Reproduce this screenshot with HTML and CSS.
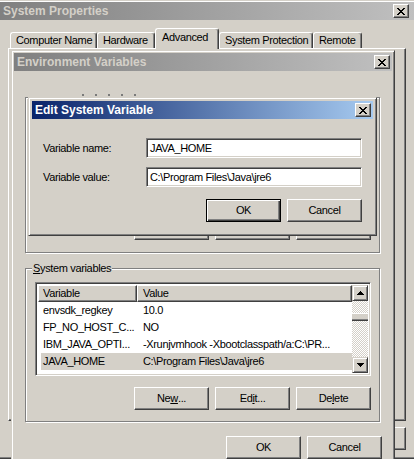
FILE: index.html
```html
<!DOCTYPE html>
<html>
<head>
<meta charset="utf-8">
<title>System Properties</title>
<link rel="stylesheet" href="styles.css">
</head>
<body>
<div class="win sys">
  <div class="title inactive">
    <span class="tt">System Properties</span>
    <span class="close"><svg width="8" height="7" viewBox="0 0 8 7" shape-rendering="crispEdges"><path d="M0 0h2v1H0zM6 0h2v1H6zM1 1h2v1H1zM5 1h2v1H5zM2 2h4v1H2zM3 3h2v1H3zM2 4h4v1H2zM1 5h2v1H1zM5 5h2v1H5zM0 6h2v1H0zM6 6h2v1H6z"/></svg></span>
  </div>
  <div class="tabs">
    <div class="tab w-cn">Computer Name</div>
    <div class="tab w-hw">Hardware</div>
    <div class="tab sel w-adv">Advanced</div>
    <div class="tab w-sp">System Protection</div>
    <div class="tab w-rm">Remote</div>
  </div>
  <div class="panel"></div>
  <div class="btn-row sys-buttons">
    <div class="btn">OK</div>
    <div class="btn">Cancel</div>
    <div class="btn">Apply</div>
  </div>
</div>

<div class="win env">
  <div class="title inactive">
    <span class="tt">Environment Variables</span>
    <span class="close"><svg width="8" height="7" viewBox="0 0 8 7" shape-rendering="crispEdges"><path d="M0 0h2v1H0zM6 0h2v1H6zM1 1h2v1H1zM5 1h2v1H5zM2 2h4v1H2zM3 3h2v1H3zM2 4h4v1H2zM1 5h2v1H1zM5 5h2v1H5zM0 6h2v1H0zM6 6h2v1H6z"/></svg></span>
  </div>
  <div class="env-body">
    <div class="group user-group">
      <span class="peek-marks"><i></i><i></i><i></i><i></i><i></i></span>
      <div class="btn-row">
        <div class="btn">N<u>e</u>w...</div>
        <div class="btn">E<u>d</u>it...</div>
        <div class="btn"><u>D</u>elete</div>
      </div>
    </div>
    <div class="group sys-group">
      <span class="group-label"><u>S</u>ystem variables</span>
      <div class="list">
        <div class="list-main">
          <div class="list-head">
            <div class="hcell c1">Variable</div>
            <div class="hcell c2">Value</div>
          </div>
          <div class="row"><span class="c1">envsdk_regkey</span><span class="c2">10.0</span></div>
          <div class="row"><span class="c1">FP_NO_HOST_C...</span><span class="c2">NO</span></div>
          <div class="row"><span class="c1">IBM_JAVA_OPTI...</span><span class="c2">-Xrunjvmhook -Xbootclasspath/a:C:\PR...</span></div>
          <div class="row selected"><span class="c1">JAVA_HOME</span><span class="c2">C:\Program Files\Java\jre6</span></div>
          <div class="row peek"><span class="dots d1"></span><span class="dots d2"></span></div>
        </div>
        <div class="scrollbar">
          <div class="sb-btn"><svg width="7" height="4" viewBox="0 0 7 4" shape-rendering="crispEdges"><path d="M3 0h1v1H3zM2 1h3v1H2zM1 2h5v1H1zM0 3h7v1H0z"/></svg></div>
          <div class="sb-track"><div class="sb-thumb"></div></div>
          <div class="sb-btn"><svg width="7" height="4" viewBox="0 0 7 4" shape-rendering="crispEdges"><path d="M0 0h7v1H0zM1 1h5v1H1zM2 2h3v1H2zM3 3h1v1H3z"/></svg></div>
        </div>
      </div>
      <div class="btn-row group-buttons">
        <div class="btn">Ne<u>w</u>...</div>
        <div class="btn">Ed<u>i</u>t...</div>
        <div class="btn">De<u>l</u>ete</div>
      </div>
    </div>
    <div class="btn-row dlg-buttons">
      <div class="btn">OK</div>
      <div class="btn">Cancel</div>
    </div>
  </div>
</div>

<div class="win edit">
  <div class="title active">
    <span class="tt">Edit System Variable</span>
    <span class="close"><svg width="8" height="7" viewBox="0 0 8 7" shape-rendering="crispEdges"><path d="M0 0h2v1H0zM6 0h2v1H6zM1 1h2v1H1zM5 1h2v1H5zM2 2h4v1H2zM3 3h2v1H3zM2 4h4v1H2zM1 5h2v1H1zM5 5h2v1H5zM0 6h2v1H0zM6 6h2v1H6z"/></svg></span>
  </div>
  <div class="edit-body">
    <div class="field"><span class="lbl">Variable name:</span><div class="input">JAVA_HOME</div></div>
    <div class="field"><span class="lbl">Variable value:</span><div class="input">C:\Program Files\Java\jre6</div></div>
    <div class="btn-row edit-buttons">
      <div class="btn default">OK</div>
      <div class="btn">Cancel</div>
    </div>
  </div>
</div>
</body>
</html>
```
FILE: styles.css
```css
* { box-sizing: border-box; margin: 0; padding: 0; }
html, body { width: 414px; height: 459px; overflow: hidden; }
body {
  position: relative;
  background: #d4d0c8;
  font-family: "Liberation Sans", Arial, sans-serif;
  font-size: 11px;
  line-height: 13px;
  letter-spacing: -0.35px;
  color: #000;
}
u { text-decoration: underline; text-underline-offset: 1px; }

.win {
  position: absolute;
  display: flex;
  flex-direction: column;
  background: #d4d0c8;
  border: 1px solid;
  border-color: #d4d0c8 #404040 #404040 #d4d0c8;
  box-shadow: inset 1px 1px #fff, inset -1px -1px #808080;
}
.sys { left: -4px; top: 0; width: 422px; height: 459px; padding: 1px 3px 3px; }
.env { left: 11px; top: 50px; width: 384px; height: 430px; padding: 2px; }
.edit { left: 28px; top: 97px; width: 349px; height: 139px; padding: 3px; }

.title {
  flex: none;
  height: 18px;
  display: flex;
  align-items: center;
  justify-content: space-between;
  padding: 0 2px 0 3px;
}
.tt { font-weight: bold; font-size: 12px; letter-spacing: 0; }
.inactive { background: linear-gradient(to right, #808080, #c0c0c0); color: #d4d0c8; }
.active { background: linear-gradient(to right, #0a246a, #a6caf0); color: #fff; }
.sys .title { padding-right: 5px; }
.close {
  width: 16px;
  height: 14px;
  background: #d4d0c8;
  border: 1px solid;
  border-color: #fff #404040 #404040 #fff;
  box-shadow: inset -1px -1px #808080;
  display: flex;
  align-items: center;
  justify-content: center;
}
.close svg { display: block; }

/* tabs */
.tabs {
  flex: none;
  display: flex;
  align-items: flex-end;
  height: 20px;
  margin-top: 8px;
  padding-left: 10px;
  position: relative;
  z-index: 1;
}
.tab {
  height: 16px;
  display: flex;
  align-items: center;
  padding-left: 5px;
  background: #d4d0c8;
  border: 1px solid;
  border-bottom: 0;
  border-color: #fff #404040 #fff #fff;
  box-shadow: inset -1px 0 #808080;
  border-radius: 3px 3px 0 0;
  white-space: nowrap;
}
.tab.sel { height: 21px; margin-bottom: -1px; padding-left: 6px; padding-bottom: 3px; }
.w-cn { width: 87px; }
.w-hw { width: 58px; }
.w-adv { width: 64px; }
.w-sp { width: 94px; }
.w-rm { width: 49px; }

.panel {
  flex: none;
  margin-left: 8px;
  width: 398px;
  height: 373px;
  border: 1px solid;
  border-color: #fff #404040 #404040 #fff;
  box-shadow: inset -1px -1px #808080;
}

/* buttons */
.btn-row { display: flex; justify-content: flex-end; gap: 6px; flex: none; }
.btn {
  width: 75px;
  height: 23px;
  display: flex;
  align-items: center;
  justify-content: center;
  background: #d4d0c8;
  border: 1px solid;
  border-color: #fff #404040 #404040 #fff;
  box-shadow: inset -1px -1px #808080;
  padding-bottom: 1px;
}
.btn.default {
  border-color: #000;
  box-shadow: inset 1px 1px #fff, inset -1px -1px #404040, inset -2px -2px #808080;
}
.sys-buttons { margin-top: 6px; margin-right: 8px; }

/* environment window */
.env-body { display: flex; flex-direction: column; padding: 0 10px 0 11px; }
.group {
  position: relative;
  flex: none;
  width: 355px;
  border: 1px solid #808080;
  box-shadow: inset 1px 1px #fff, 1px 1px #fff;
}
.group-label {
  position: absolute;
  left: 6px;
  top: -7px;
  padding: 0 1px;
  background: #d4d0c8;
  white-space: nowrap;
}
.peek-marks {
  position: absolute;
  left: 56px;
  top: -4px;
  display: flex;
  gap: 11px;
}
.peek-marks i { display: block; width: 2px; height: 2px; background: #7a7a7a; }
.user-group {
  margin-top: 26px;
  height: 156px;
  display: flex;
  flex-direction: column;
  justify-content: flex-end;
  padding: 0 8px 12px 9px;
}
.sys-group { margin-top: 15px; height: 154px; padding: 13px 8px 11px 9px; }
.group-buttons { margin-top: 11px; }
.dlg-buttons { margin-top: 14px; }

.list {
  width: 336px;
  height: 94px;
  display: flex;
  background: #fff;
  border: 1px solid;
  border-color: #808080 #fff #fff #808080;
  box-shadow: inset 1px 1px #404040, inset -1px -1px #d4d0c8;
  padding: 2px;
  overflow: hidden;
}
.list-main { flex: 1; min-width: 0; overflow: hidden; }
.list-head { display: flex; height: 17px; }
.hcell {
  height: 17px;
  display: flex;
  align-items: center;
  background: #d4d0c8;
  border: 1px solid;
  border-color: #fff #404040 #404040 #fff;
  box-shadow: inset -1px -1px #808080;
  padding-left: 4px;
}
.hcell.c1 { width: 99px; }
.hcell.c2 { flex: 1; padding-left: 5px; }
.row {
  display: flex;
  height: 17px;
  align-items: center;
  margin-left: 3px;
  white-space: nowrap;
}
.row .c1 { width: 96px; padding-left: 2px; overflow: hidden; }
.row .c2 { padding-left: 6px; }
.row.selected { background: #d4d0c8; }
.row.peek { align-items: flex-start; padding-top: 3px; }
.dots { display: block; height: 1px; border-top: 1px dotted #606060; }
.d1 { width: 5px; margin-left: 132px; }
.d2 { width: 2px; margin-left: 40px; }

.scrollbar { width: 16px; flex: none; display: flex; flex-direction: column; }
.sb-btn {
  height: 16px;
  flex: none;
  display: flex;
  align-items: center;
  justify-content: center;
  background: #d4d0c8;
  border: 1px solid;
  border-color: #d4d0c8 #404040 #404040 #d4d0c8;
  box-shadow: inset 1px 1px #fff, inset -1px -1px #808080;
}
.sb-btn svg { display: block; }
.sb-track {
  flex: 1;
  padding-top: 12px;
  background: repeating-conic-gradient(#fff 0 25%, #d4d0c8 0 50%) 0 0 / 2px 2px;
}
.sb-thumb {
  height: 8px;
  background: #d4d0c8;
  border-top: 1px solid #fff;
  border-bottom: 1px solid #404040;
  box-shadow: inset 0 -1px #808080;
}

/* edit window */
.edit-body { display: flex; flex-direction: column; padding: 19px 11px 0 11px; }
.field { display: flex; align-items: center; height: 20px; }
.field + .field { margin-top: 9px; }
.lbl { width: 103px; flex: none; }
.input {
  flex: 1;
  height: 20px;
  display: flex;
  align-items: center;
  background: #fff;
  border: 1px solid;
  border-color: #808080 #fff #fff #808080;
  box-shadow: inset 1px 1px #404040, inset -1px -1px #d4d0c8;
  padding-left: 3px;
  white-space: nowrap;
}
.edit-buttons { margin-top: 12px; }
```
